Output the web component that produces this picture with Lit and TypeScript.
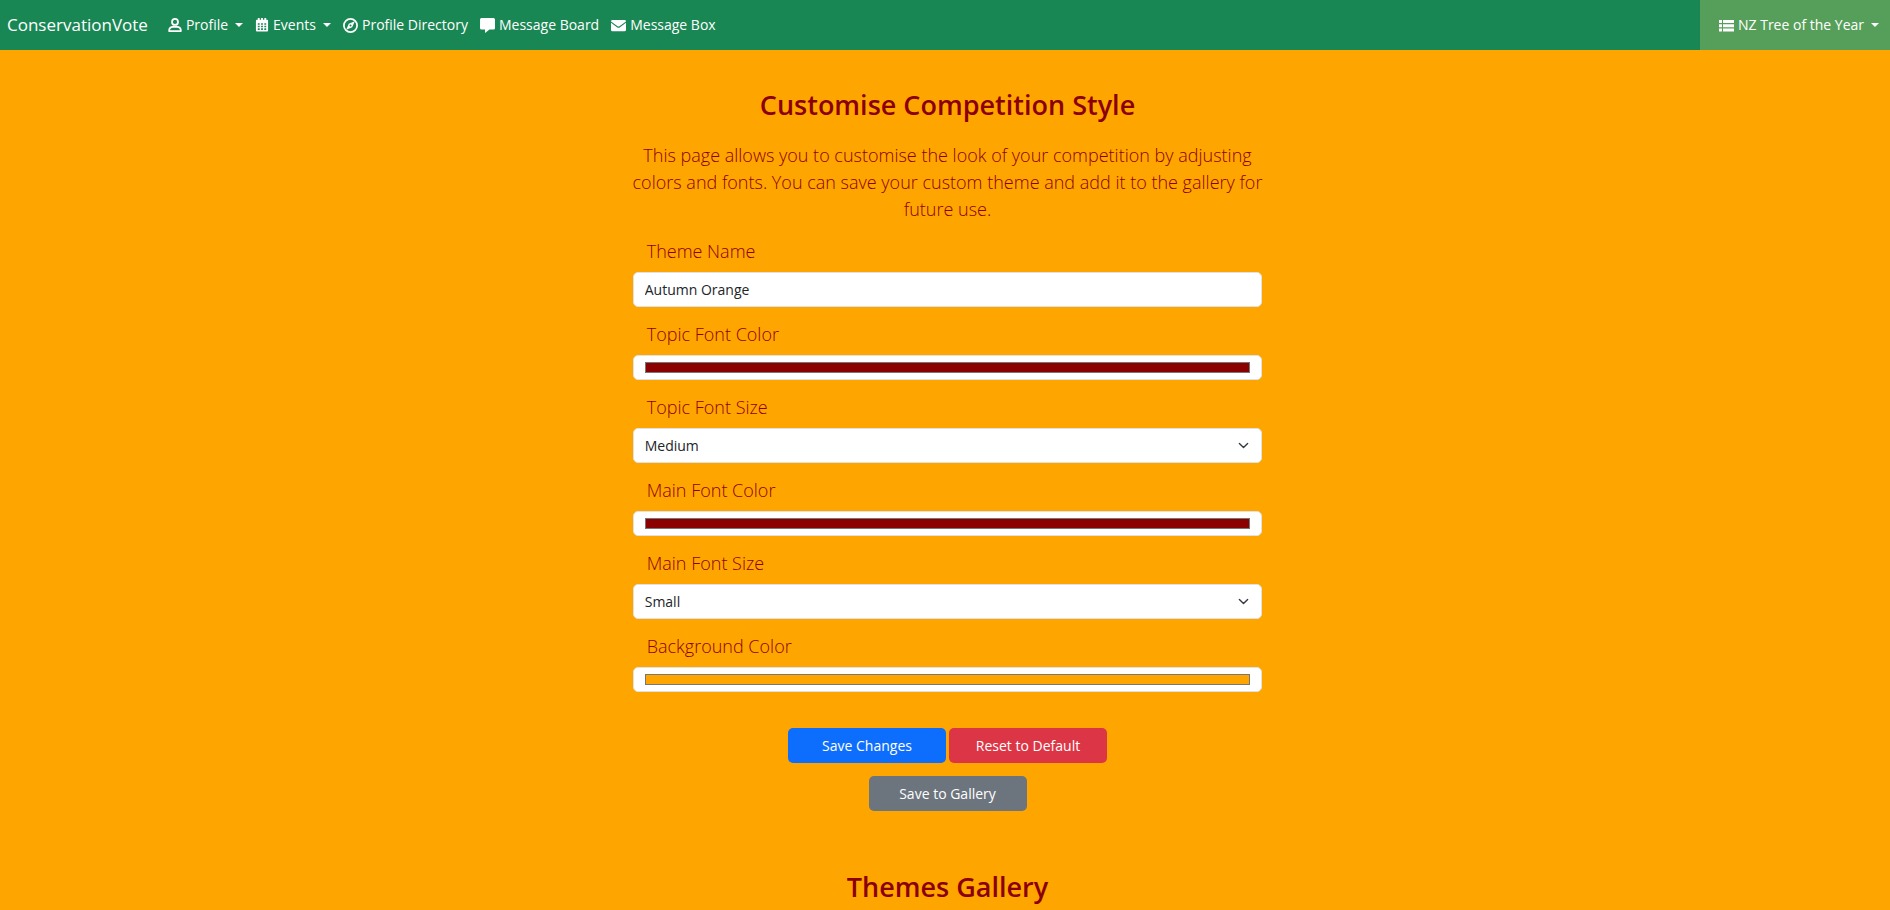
import { LitElement, html, css, svg } from "lit";
import { customElement, state } from "lit/decorators.js";

const icons = {
  user: svg`<path fill="none" stroke="currentColor" stroke-width="1.9" d="M7.500 1a3.200 3.200 0 1 1 0 6.400a3.200 3.200 0 0 1 0-6.400zM1.200 14c0-2.900 1.700-4.400 4.300-4.400h4c2.600 0 4.300 1.500 4.300 4.400z" stroke-linejoin="round"/>`,
  calendar: svg`<path fill="currentColor" fill-rule="evenodd" d="M3 0h2v2h1.500V0h2v2H10V0h2v2h1q1 0 1 1v10.500q0 1-1 1H2q-1 0-1-1V3q0-1 1-1h1zM3 5.500v1.700h2V5.500zm3.500 0v1.700h2V5.500zm3.500 0v1.700h2V5.500zM3 8.300V10h2V8.300zm3.500 0V10h2V8.300zm3.500 0V10h2V8.300zM3 11.100v1.700h2v-1.700zm3.500 0v1.700h2v-1.700zm3.500 0v1.700h2v-1.700z"/>`,
  compass: svg`<circle cx="7.500" cy="7.500" r="6.600" fill="none" stroke="currentColor" stroke-width="1.700"/><path fill="currentColor" fill-rule="evenodd" d="M11.800 3.200L9.200 9.200L3.200 11.800L5.800 5.800zM7.500 6.500a1 1 0 1 0 0 2a1 1 0 0 0 0-2z"/>`,
  chat: svg`<path fill="currentColor" d="M1.500 0h12Q15 0 15 1.500v8.500q0 1.500-1.500 1.500H9.500L5 15v-3.500H1.500Q0 11.500 0 10V1.500Q0 0 1.500 0z"/>`,
  mail: svg`<path fill="currentColor" d="M1.500 2h12Q15 2 15 3.400L8.400 8.300q-.9.600-1.800 0L0 3.400Q0 2 1.500 2zM0 4.700l6 4.500q1.500 1 3 0l6-4.500v7q0 1.500-1.500 1.500h-12Q0 13.200 0 11.700z"/>`,
  list: svg`<path fill="currentColor" d="M0 2h3v3H0zM4 2h11v3H4zM0 6.300h3v3H0zM4 6.300h11v3H4zM0 10.600h3v3H0zM4 10.600h11v3H4z"/>`,
};

const icon = (name: keyof typeof icons) =>
  html`<svg class="icon" viewBox="0 0 15 15" aria-hidden="true">${icons[name]}</svg>`;

@customElement("nav-bar")
class NavBar extends LitElement {
  static styles = css`
    :host { display: block; }
    .bar {
      display: flex;
      align-items: stretch;
      min-height: 50px;
      background: #198754;
      color: #fff;
      font-size: 14px;
      line-height: 20px;
    }
    a, button { color: inherit; font: inherit; text-decoration: none; }
    .brand { display: flex; align-items: center; padding: 0 14px 0 7px; font-size: 17px; }
    .links { display: flex; flex-wrap: wrap; list-style: none; margin: 0; padding: 0; }
    .links li { display: flex; }
    .link {
      display: flex;
      align-items: center;
      gap: 4px;
      padding: 0 6px;
      border: 0;
      background: none;
      white-space: nowrap;
      cursor: pointer;
    }
    .icon { width: 15px; height: 15px; flex: none; }
    .narrow .icon { width: 14px; height: 14px; }
    .caret {
      margin-left: 3px;
      border-top: 4px solid;
      border-left: 4px solid transparent;
      border-right: 4px solid transparent;
    }
    .event { margin-left: auto; padding: 0 11px 0 19px; background: #569f5a; }
  `;

  render() {
    return html`
      <nav class="bar">
        <a class="brand" href="#">ConservationVote</a>
        <ul class="links">
          <li><button class="link narrow">${icon("user")}Profile<span class="caret"></span></button></li>
          <li><button class="link narrow">${icon("calendar")}Events<span class="caret"></span></button></li>
          <li><a class="link" href="#">${icon("compass")}Profile Directory</a></li>
          <li><a class="link" href="#">${icon("chat")}Message Board</a></li>
          <li><a class="link" href="#">${icon("mail")}Message Box</a></li>
        </ul>
        <button class="link event">${icon("list")}NZ Tree of the Year<span class="caret"></span></button>
      </nav>
    `;
  }
}

@customElement("app-root")
class AppRoot extends LitElement {
  @state() private themeName = "Autumn Orange";

  static styles = css`
    :host {
      display: block;
      min-height: 100vh;
      background: #ffa500;
      color: #8b0000;
      font-family: "Segoe UI", "Open Sans", "Noto Sans", sans-serif;
    }
    .page {
      box-sizing: border-box;
      width: 34%;
      min-width: 320px;
      margin: 0 auto;
      padding: 37px 0 0 5px;
    }
    .content { padding: 0 4px; }
    .title { margin: 0; font-size: 27px; line-height: 36px; font-weight: 600; text-align: center; }
    .intro { margin: 19px -4px 15px; font-size: 18px; line-height: 27px; font-weight: 300; text-align: center; }
    .label { display: block; padding: 0 14px; margin-bottom: 7px; font-size: 18px; line-height: 27px; font-weight: 300; }
    .field { margin-bottom: 14px; }
    .control {
      display: block;
      box-sizing: border-box;
      width: 100%;
      height: 35px;
      margin: 0;
      padding: 0 11px;
      border: 1px solid #dee2e6;
      border-radius: 5px;
      background-color: #fff;
      color: #212529;
      font-family: inherit;
      font-size: 14px;
      line-height: 20px;
      appearance: none;
    }
    .select {
      background-image: url("data:image/svg+xml,%3csvg xmlns='http://www.w3.org/2000/svg' viewBox='0 0 16 16'%3e%3cpath fill='none' stroke='%23343a40' stroke-linecap='round' stroke-linejoin='round' stroke-width='2' d='m2 5 6 6 6-6'/%3e%3c/svg%3e");
      background-repeat: no-repeat;
      background-position: right 12px center;
      background-size: 11px 11px;
    }
    .color { height: 25px; padding: 6px 11px; }
    .color::-webkit-color-swatch-wrapper { padding: 0; }
    .color::-webkit-color-swatch { border: 1px solid #777; border-radius: 0; }
    .actions { display: flex; flex-wrap: wrap; justify-content: center; gap: 13px 3px; padding: 22px 140px 0; }
    .button {
      width: 158px;
      height: 35px;
      padding: 0;
      border: 0;
      border-radius: 5px;
      color: #fff;
      font-family: inherit;
      font-size: 14px;
      line-height: 20px;
      cursor: pointer;
    }
    .save { background: #0d6efd; }
    .reset { background: #dc3545; }
    .gallery { background: #6c757d; }
    .gallery-title { margin-top: 58px; }
  `;

  private colorField(id: string, label: string, value: string) {
    return html`<div class="field">
      <label class="label" for=${id}>${label}</label>
      <input class="control color" type="color" id=${id} .value=${value} />
    </div>`;
  }

  private sizeField(id: string, label: string, value: string) {
    return html`<div class="field">
      <label class="label" for=${id}>${label}</label>
      <select class="control select" id=${id}>
        ${["Small", "Medium", "Large"].map(
          (size) => html`<option ?selected=${size === value}>${size}</option>`
        )}
      </select>
    </div>`;
  }

  render() {
    return html`
      <nav-bar></nav-bar>
      <main class="page">
        <div class="content">
          <h2 class="title">Customise Competition Style</h2>
          <p class="intro">
            This page allows you to customise the look of your competition by adjusting
            colors and fonts. You can save your custom theme and add it to the gallery for
            future use.
          </p>
          <form @submit=${(e: Event) => e.preventDefault()}>
            <div class="field">
              <label class="label" for="theme-name">Theme Name</label>
              <input class="control" type="text" id="theme-name" .value=${this.themeName} />
            </div>
            ${this.colorField("topic-color", "Topic Font Color", "#8b0000")}
            ${this.sizeField("topic-size", "Topic Font Size", "Medium")}
            ${this.colorField("main-color", "Main Font Color", "#8b0000")}
            ${this.sizeField("main-size", "Main Font Size", "Small")}
            ${this.colorField("background-color", "Background Color", "#ffa500")}
            <div class="actions">
              <button class="button save" type="submit">Save Changes</button>
              <button class="button reset" type="button">Reset to Default</button>
              <button class="button gallery" type="button">Save to Gallery</button>
            </div>
          </form>
          <h2 class="title gallery-title">Themes Gallery</h2>
        </div>
      </main>
    `;
  }
}
